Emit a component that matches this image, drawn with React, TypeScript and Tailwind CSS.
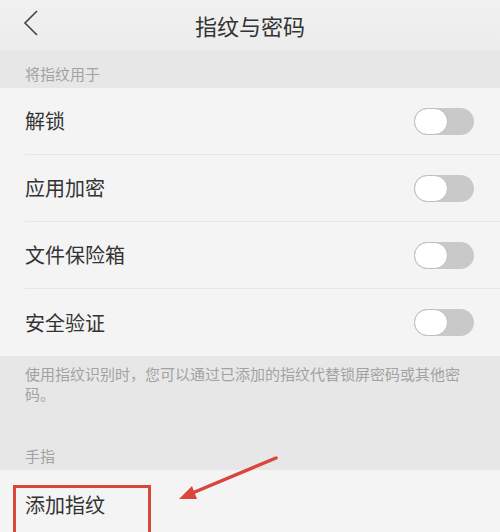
function Toggle() {
  return (
    <div className="relative h-[27px] w-[60px] rounded-full bg-[#c9c9c9]">
      <div className="absolute left-0 top-0 h-[27px] w-[34px] rounded-full border border-[#bdbdbd] bg-white" />
    </div>
  )
}

export default function App() {
  const items = ['解锁', '应用加密', '文件保险箱', '安全验证']

  return (
    <div
      className="relative h-[532px] w-[500px] overflow-hidden bg-[#f4f4f4] text-[#333]"
      style={{ fontFamily: '"Noto Sans CJK SC", "Noto Sans", sans-serif' }}
    >
      {/* Header */}
      <div className="relative flex h-[50px] items-center justify-center bg-gradient-to-b from-[#f1f1f1] to-[#ececec]">
        <svg className="absolute left-[23px] top-[10px]" width="16" height="26" viewBox="0 0 16 26">
          <path d="M14 1 L2 13 L14 25" fill="none" stroke="#444" strokeWidth="1.6" />
        </svg>
        <div className="text-[22px] leading-none text-[#333]">指纹与密码</div>
      </div>

      {/* Section title */}
      <div className="h-[38px] bg-[#e7e7e7] px-[25px] pt-[14px] text-[15px] leading-[20px] text-[#a2a2a2]">
        将指纹用于
      </div>

      {/* Switch rows */}
      <div className="bg-[#f4f4f4]">
        {items.map((item, i) => (
          <div key={item} className="pl-[25px]">
            <div
              className={
                'flex h-[67px] items-center justify-between pr-[26px] ' +
                (i < items.length - 1 ? 'border-b border-[#e6e6e6]' : '')
              }
            >
              <span className="text-[20px] leading-none">{item}</span>
              <Toggle />
            </div>
          </div>
        ))}
      </div>

      {/* Footer note */}
      <div className="h-[114px] bg-[#e7e7e7] pl-[25px] pr-[30px] pt-[8px] text-[15px] leading-[20px] text-[#a2a2a2]">
        <p>使用指纹识别时，您可以通过已添加的指纹代替锁屏密码或其他密码。</p>
        <p className="mt-[42px]">手指</p>
      </div>

      {/* Add fingerprint row */}
      <div className="flex h-[62px] items-center px-[25px] pt-[8px]">
        <span className="text-[20px] leading-none">添加指纹</span>
      </div>

      {/* Annotation: red box */}
      <div className="absolute left-[13px] top-[485px] h-[60px] w-[138px] border-[3px] border-[#d9463b]" />

      {/* Annotation: arrow */}
      <svg className="absolute left-0 top-0" width="500" height="532" viewBox="0 0 500 532">
        <line x1="276" y1="458" x2="190" y2="494" stroke="#d9463b" strokeWidth="3.5" strokeLinecap="round" />
        <polygon points="179,499 192,486 197,499" fill="#d9463b" />
      </svg>
    </div>
  )
}
